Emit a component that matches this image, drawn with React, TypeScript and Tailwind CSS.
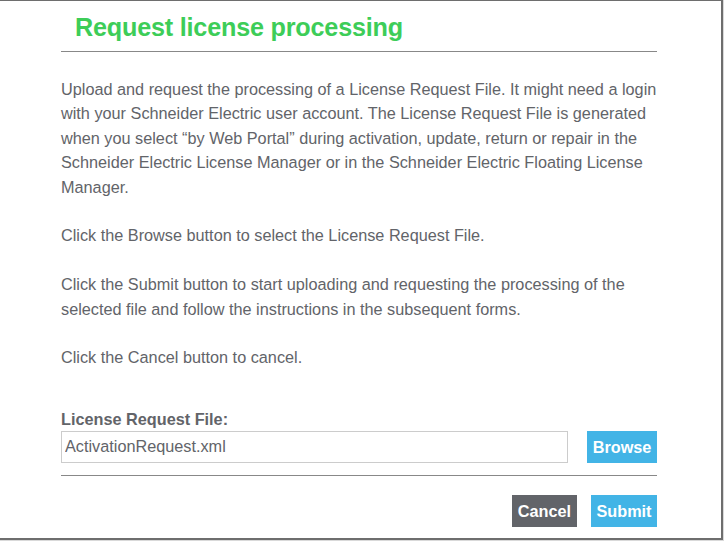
const FONT = { fontFamily: '"Liberation Sans", Arial, sans-serif' };

const paragraphs = [
  'Upload and request the processing of a License Request File. It might need a login with your Schneider Electric user account. The License Request File is generated when you select \u201cby Web Portal\u201d during activation, update, return or repair in the Schneider Electric License Manager or in the Schneider Electric Floating License Manager.',
  'Click the Browse button to select the License Request File.',
  'Click the Submit button to start uploading and requesting the processing of the selected file and follow the instructions in the subsequent forms.',
  'Click the Cancel button to cancel.',
];

export default function App() {
  return (
    <div className="w-[724px] h-[541px] bg-[#d9d9d9] overflow-hidden" style={FONT}>
      <div className="w-[723px] h-[540px] bg-white border-t border-r-2 border-b-2 border-[#6e6e6e] flex flex-col pl-[61px] pr-[64px]">
        {/* header */}
        <h1 className="pl-[14px] pt-[11px] pb-[9px] text-[25.2px] leading-[30px] font-bold text-[#3dcd58] tracking-[-0.2px]">
          Request license processing
        </h1>
        <div className="h-px bg-[#888888]" />

        {/* description */}
        <div className="mt-[25px] flex flex-col gap-[24.4px] text-[16.25px] leading-[24.4px] text-[#626469]">
          {paragraphs.map((p, i) => (
            <p key={i}>{p}</p>
          ))}
        </div>

        {/* file picker */}
        <label className="mt-[39px] text-[16.25px] leading-5 font-bold text-[#626469]">License Request File:</label>
        <div className="mt-[2px] flex items-center gap-[19px]">
          <input
            readOnly
            value="ActivationRequest.xml"
            className="w-[507px] h-8 border border-[#cccccc] px-[3px] text-[16.25px] text-[#626469] outline-none"
            style={FONT}
          />
          <button className="w-[70px] h-8 bg-[#42b4e6] text-white font-bold text-[16.25px]">Browse</button>
        </div>
        <div className="mt-[12px] h-px bg-[#888888]" />

        {/* actions */}
        <div className="mt-[19px] flex justify-end gap-[14px]">
          <button className="w-[65px] h-8 bg-[#626469] text-white font-bold text-[16.25px]">Cancel</button>
          <button className="w-[66px] h-8 bg-[#42b4e6] text-white font-bold text-[16.25px]">Submit</button>
        </div>
      </div>
    </div>
  );
}
